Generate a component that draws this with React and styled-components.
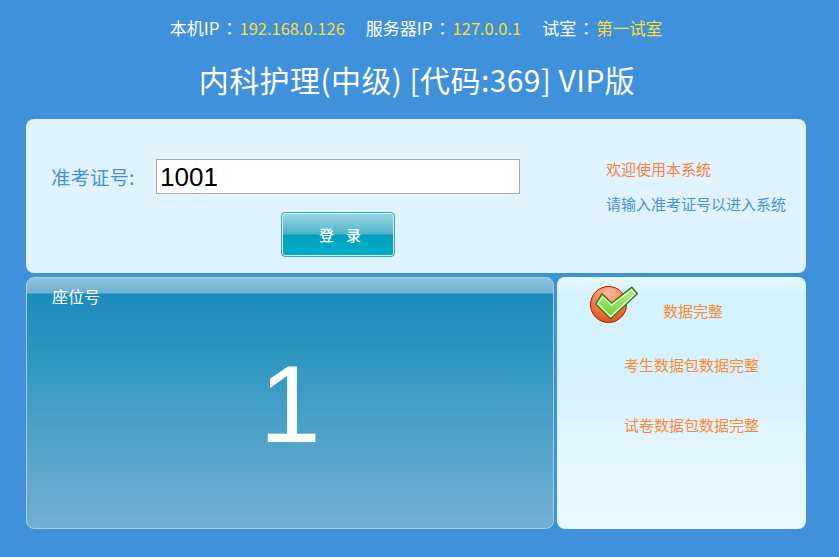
import styled, { createGlobalStyle } from 'styled-components';

const Global = createGlobalStyle`
  html, body {
    margin: 0;
    padding: 0;
    height: 100%;
    background: #4091db;
    font-family: "Noto Sans CJK SC", "Noto Sans", sans-serif;
  }
`;

const Page = styled.div`
  width: 839px;
  height: 557px;
  overflow: hidden;
  box-sizing: border-box;
  padding-top: 16px;
`;

const InfoBar = styled.div`
  display: flex;
  justify-content: center;
  gap: 21px;
  height: 24px;
  line-height: 24px;
  font-size: 17px;
  color: #fff;
  padding-right: 7px;
`;

const Colon = styled.span`
  display: inline-block;
  width: 20px;
  text-align: center;
  font-family: "Noto Sans CJK TC", sans-serif;
`;

const Value = styled.span`
  color: #ffdc33;
  font-size: 16.5px;
`;

const Title = styled.h1`
  margin: 0;
  padding: 17px 5px 0 0;
  height: 80px;
  box-sizing: border-box;
  line-height: 45px;
  font-size: 30px;
  font-weight: 400;
  letter-spacing: 0.42px;
  text-align: center;
  color: #fff;
`;

const Content = styled.div`
  width: 780px;
  margin-left: 26px;
`;

const LoginCard = styled.div`
  height: 154px;
  margin-top: -1px;
  box-sizing: border-box;
  border-radius: 8px;
  background: #e0f4ff;
  display: flex;
  justify-content: space-between;
`;

const LoginForm = styled.form`
  padding: 40px 0 0 25px;
`;

const Field = styled.div`
  display: flex;
  align-items: center;
`;

const Label = styled.label`
  width: 105px;
  font-size: 19.5px;
  color: #4a90d9;
`;

const TicketInput = styled.input`
  width: 364px;
  height: 35px;
  box-sizing: border-box;
  border: 1px solid #a9a9a9;
  padding: 1px 3px 0;
  background: #fff;
  color: #000;
  font-family: "Liberation Sans", sans-serif;
  font-size: 26px;
  outline: none;
`;

const LoginButton = styled.button`
  display: block;
  width: 114px;
  height: 45px;
  margin: 18px 0 0 230px;
  padding: 0;
  border: 1px solid #35a3d3;
  border-radius: 4px;
  box-shadow: inset 0 0 0 1px #d5eff6;
  background: linear-gradient(#a0d8e2 0, #4fb5cb 48%, #00a0bd 52%, #00aeca 100%);
  color: #fff;
  font-family: "Noto Sans CJK SC", sans-serif;
  font-size: 15px;
  font-weight: 500;
  letter-spacing: 12px;
  text-indent: 16px;
`;

const Hints = styled.div`
  width: 200px;
  padding-top: 40px;
  font-size: 15px;
  line-height: 20px;
  display: flex;
  flex-direction: column;
  gap: 15px;
`;

const Hint = styled.div`
  color: ${(p) => p.$color};
  white-space: nowrap;
`;

const Panels = styled.div`
  display: flex;
  justify-content: space-between;
  margin-top: 4px;
  height: 252px;
`;

const SeatPanel = styled.div`
  width: 528px;
  box-sizing: border-box;
  border: 1px solid #a5d2e6;
  border-radius: 8px;
  background: linear-gradient(#8cc3db 0, #6fb2d2 15px, #1b8cbd 16px, #2f97c2 80px, #73b0d1 100%);
  color: #fff;
`;

const SeatLabel = styled.div`
  padding: 7px 0 0 25px;
  font-size: 16px;
  line-height: 22px;
`;

const SeatNumber = styled.div`
  margin-top: 34px;
  text-align: center;
  font-family: "Liberation Sans", sans-serif;
  font-size: 110px;
  line-height: 126px;
`;

const StatusPanel = styled.div`
  position: relative;
  width: 249px;
  box-sizing: border-box;
  border-radius: 8px;
  background: linear-gradient(#e8f9ff 0, #d5f2ff 18px, #d8f2ff 130px, #e0f5ff 150px, #e7f9ff 100%);
  padding: 24px 0 0 20px;
`;

const CheckIcon = styled.svg`
  position: absolute;
  left: 33px;
  top: 8px;
`;

const StatusRow = styled.div`
  height: ${(p) => p.$height}px;
  font-size: 15px;
  line-height: 20px;
  text-align: center;
  color: #ff8a33;
  padding-left: ${(p) => p.$indent || 0}px;
`;

const App = () => (
  <Page>
    <Global />
    <InfoBar>
      <span>本机IP<Colon>：</Colon><Value>192.168.0.126</Value></span>
      <span>服务器IP<Colon>：</Colon><Value>127.0.0.1</Value></span>
      <span>试室<Colon>：</Colon><Value>第一试室</Value></span>
    </InfoBar>
    <Title>内科护理(中级) [代码:369] VIP版</Title>
    <Content>
      <LoginCard>
        <LoginForm onSubmit={(e) => e.preventDefault()}>
          <Field>
            <Label>准考证号:</Label>
            <TicketInput defaultValue="1001" />
          </Field>
          <LoginButton type="button">登录</LoginButton>
        </LoginForm>
        <Hints>
          <Hint $color="#ff7f3f">欢迎使用本系统</Hint>
          <Hint $color="#4a90d9">请输入准考证号以进入系统</Hint>
        </Hints>
      </LoginCard>
      <Panels>
        <SeatPanel>
          <SeatLabel>座位号</SeatLabel>
          <SeatNumber>1</SeatNumber>
        </SeatPanel>
        <StatusPanel>
          <CheckIcon width="48" height="38" viewBox="0 0 48 38">
            <defs>
              <radialGradient id="ball" cx="50%" cy="20%" r="85%">
                <stop offset="0" stopColor="#ffb6a0" />
                <stop offset="0.5" stopColor="#f9854f" />
                <stop offset="1" stopColor="#e2470f" />
              </radialGradient>
              <linearGradient id="tick" x1="0" y1="0" x2="0" y2="1">
                <stop offset="0" stopColor="#b4ef7c" />
                <stop offset="1" stopColor="#6fd13a" />
              </linearGradient>
            </defs>
            <circle cx="18.5" cy="19.5" r="18" fill="url(#ball)" stroke="#a81e05" strokeWidth="1" />
            <path d="M5.7 19 L12 9 L21.7 18 L41.7 2.3 L47.3 8.7 L20.7 33.7 Z" fill="#e6fbd0" stroke="#2f7f12" strokeWidth="1.5" />
            <path d="M8.6 18.8 L12.4 12.6 L21.7 21 L41.4 5.6 L44.3 8.8 L20.7 30.6 Z" fill="url(#tick)" />
          </CheckIcon>
          <StatusRow $height={54} $indent={3}>数据完整</StatusRow>
          <StatusRow $height={60}>考生数据包数据完整</StatusRow>
          <StatusRow $height={20}>试卷数据包数据完整</StatusRow>
        </StatusPanel>
      </Panels>
    </Content>
  </Page>
);

export default App;
